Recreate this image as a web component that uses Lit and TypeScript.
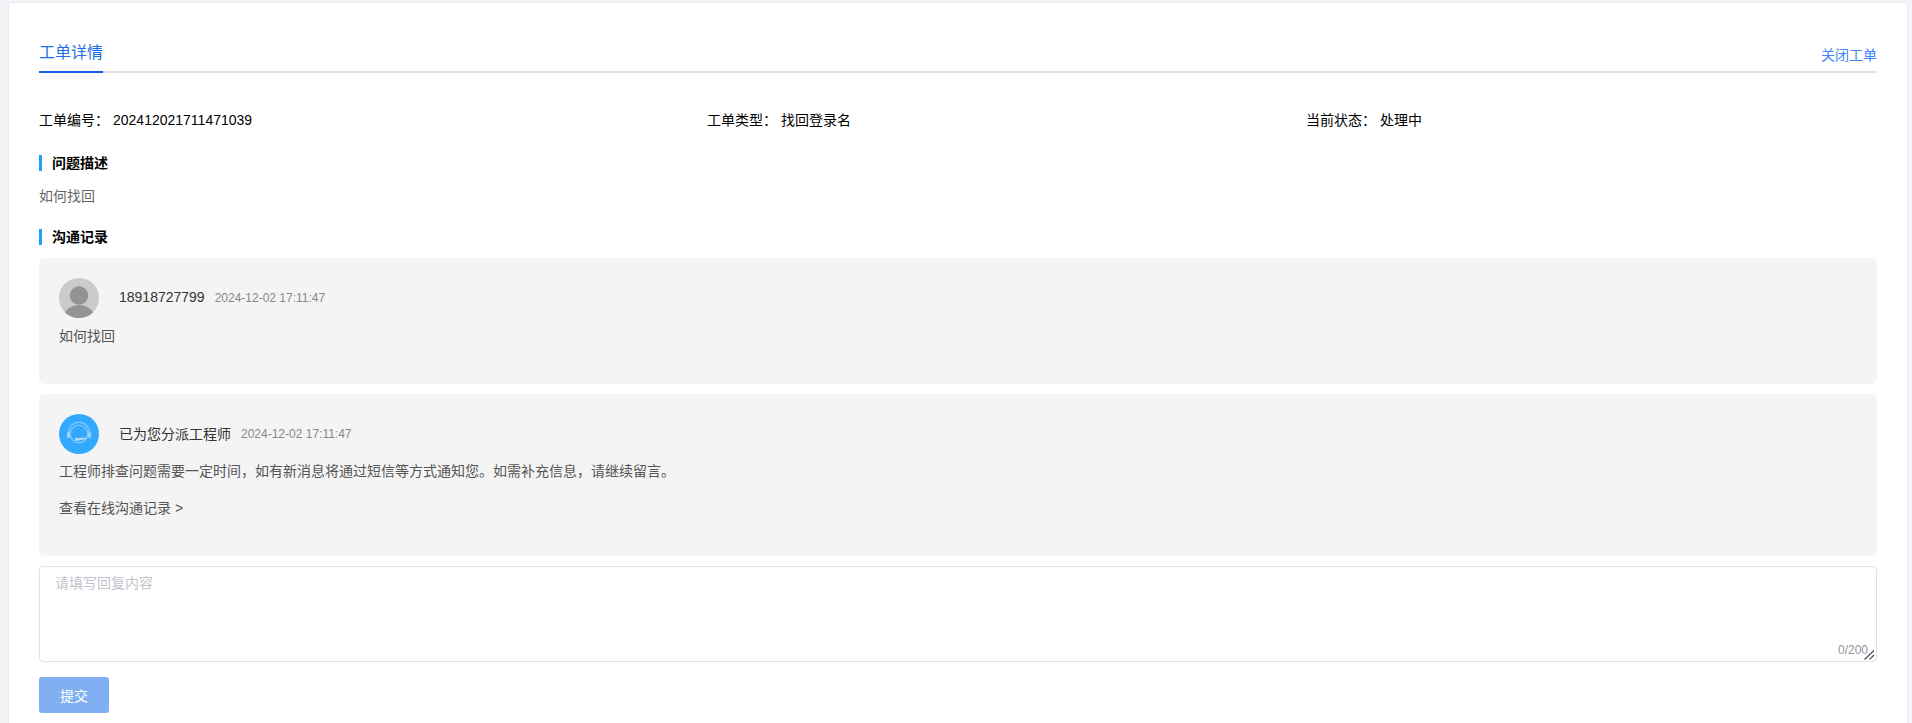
import { LitElement, html, css } from "lit";
import { customElement } from "lit/decorators.js";

const userIcon = html`<svg class="avatar" viewBox="0 0 40 40" aria-hidden="true">
  <defs><clipPath id="uc"><circle cx="20" cy="20" r="20"></circle></clipPath></defs>
  <g clip-path="url(#uc)">
    <rect width="40" height="40" fill="#cbcbcb"></rect>
    <circle cx="20" cy="17.5" r="9.3" fill="#939393"></circle>
    <ellipse cx="20" cy="40" rx="15.5" ry="13" fill="#939393"></ellipse>
  </g>
</svg>`;

const agentIcon = html`<svg class="avatar" viewBox="0 0 40 40" aria-hidden="true">
  <circle cx="20" cy="20" r="20" fill="#33a9fd"></circle>
  <g fill="none" stroke="#8accfa" stroke-width="1.1">
    <circle cx="20" cy="20" r="8.8"></circle>
    <path d="M9.6 19a10.4 10.8 0 0 1 20.8 0"></path>
  </g>
  <rect x="7.8" y="18" width="3.2" height="6" rx="1.3" fill="#93d0fa"></rect>
  <rect x="29" y="18" width="3.2" height="6" rx="1.3" fill="#93d0fa"></rect>
  <path d="M15.8 25.4c0-1 1-1.5 2.2-1.4l9.5-.2v1.3l-9 1.6c-1.5.2-2.7-.1-2.7-1.3z" fill="#a9d9fb"></path>
</svg>`;

const grip = html`<svg class="grip" viewBox="0 0 11 10" aria-hidden="true">
  <path d="M0.5 9.5L10 0.5M5.5 9.5L10 5" fill="none" stroke="#555" stroke-width="1.3"></path>
</svg>`;

@customElement("app-root")
export class AppRoot extends LitElement {
  static styles = css`
    :host {
      display: block;
      height: 723px;
      overflow: hidden;
      background: #f3f4f8;
      font-family: "Liberation Sans", "Noto Sans CJK SC", sans-serif;
      font-size: 14px;
      color: #000;
    }
    .card {
      box-sizing: border-box;
      margin: 2px 4px 0 8px;
      height: 721px;
      padding: 0 30px;
      background: #fff;
      border: 1px solid #e9e9ee;
      border-bottom: 0;
    }
    .tabs {
      box-sizing: border-box;
      display: flex;
      justify-content: space-between;
      align-items: flex-end;
      margin-top: 29px;
      height: 41px;
      border-bottom: 2px solid #e4e4e6;
    }
    .tab {
      font-size: 16px;
      line-height: 22px;
      padding-bottom: 7px;
      margin-bottom: -2px;
      color: #1a6fe8;
      border-bottom: 2px solid #0f62e6;
    }
    .close {
      color: #3f86f7;
      line-height: 20px;
      padding-bottom: 6px;
    }
    .info {
      display: grid;
      grid-template-columns: 668px 599px 1fr;
      margin-top: 37px;
      line-height: 20px;
    }
    .label { margin-right: 4px; }
    .section {
      display: flex;
      align-items: center;
      height: 16px;
      padding-left: 10px;
      border-left: 3px solid #1aa3f8;
      font-weight: 700;
      line-height: 16px;
    }
    .s1 { margin-top: 25px; }
    .s2 { margin-top: 23px; }
    .desc {
      margin-top: 15px;
      line-height: 20px;
      color: #666;
    }
    .msg {
      box-sizing: border-box;
      background: #f4f4f4;
      border-radius: 6px;
      padding: 20px;
      color: #555;
    }
    .m1 { margin-top: 13px; height: 126px; }
    .m2 { margin-top: 10px; height: 162px; }
    .head {
      display: flex;
      align-items: center;
      height: 40px;
    }
    .avatar {
      display: block;
      flex: none;
      width: 40px;
      height: 40px;
      margin-right: 20px;
    }
    .name { color: #333; margin-right: 10px; padding-bottom: 2px; }
    .time { color: #888; font-size: 12px; }
    .text {
      margin: 8px 0 0;
      line-height: 20px;
    }
    .m2 .text { margin-top: 7px; }
    .m2 .text + .text { margin-top: 17px; }
    .reply {
      position: relative;
      margin-top: 10px;
      height: 96px;
    }
    textarea {
      display: block;
      box-sizing: border-box;
      width: 100%;
      height: 96px;
      padding: 6px 15px;
      border: 1px solid #e2e2e2;
      border-radius: 4px;
      outline: 0;
      font: inherit;
      line-height: 20px;
      background: #fff;
      resize: none;
    }
    textarea::placeholder { color: #c0c4cc; opacity: 1; }
    .count {
      position: absolute;
      right: 9px;
      bottom: 5px;
      font-size: 12px;
      line-height: 14px;
      color: #909399;
    }
    .grip {
      position: absolute;
      right: 2px;
      bottom: 2px;
      width: 11px;
      height: 10px;
    }
    button {
      display: block;
      box-sizing: border-box;
      width: 70px;
      height: 36px;
      margin-top: 15px;
      padding: 0 0 1px;
      border: 0;
      border-radius: 3px;
      background: #80b0f2;
      color: #fff;
      font: inherit;
    }
  `;

  render() {
    return html`<div class="card">
      <div class="tabs">
        <div class="tab">工单详情</div>
        <div class="close">关闭工单</div>
      </div>
      <div class="info">
        <div><span class="label">工单编号：</span>202412021711471039</div>
        <div><span class="label">工单类型：</span>找回登录名</div>
        <div><span class="label">当前状态：</span>处理中</div>
      </div>
      <div class="section s1">问题描述</div>
      <div class="desc">如何找回</div>
      <div class="section s2">沟通记录</div>
      <div class="msg m1">
        <div class="head">${userIcon}<span class="name">18918727799</span><span class="time">2024-12-02 17:11:47</span></div>
        <p class="text">如何找回</p>
      </div>
      <div class="msg m2">
        <div class="head">${agentIcon}<span class="name">已为您分派工程师</span><span class="time">2024-12-02 17:11:47</span></div>
        <p class="text">工程师排查问题需要一定时间，如有新消息将通过短信等方式通知您。如需补充信息，请继续留言。</p>
        <p class="text">查看在线沟通记录 &gt;</p>
      </div>
      <div class="reply">
        <textarea placeholder="请填写回复内容"></textarea>
        <span class="count">0/200</span>
        ${grip}
      </div>
      <button>提交</button>
    </div>`;
  }
}
